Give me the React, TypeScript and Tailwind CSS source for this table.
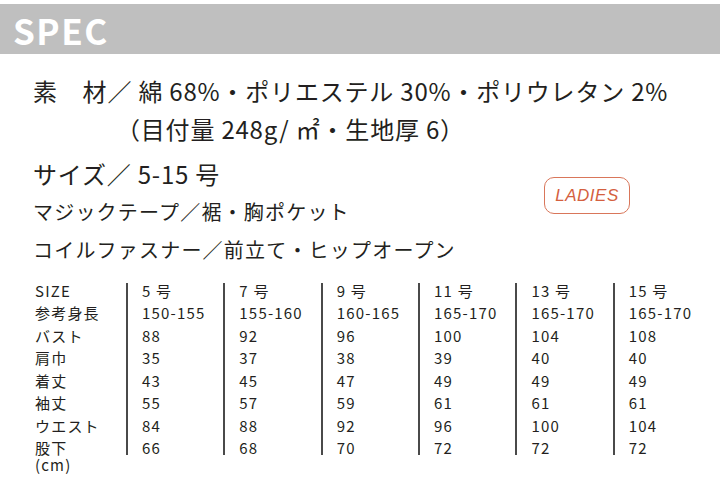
const sizes = [
  { size: '5 号', height: '150-155', vals: ['88', '35', '43', '55', '84', '66'] },
  { size: '7 号', height: '155-160', vals: ['92', '37', '45', '57', '88', '68'] },
  { size: '9 号', height: '160-165', vals: ['96', '38', '47', '59', '92', '70'] },
  { size: '11 号', height: '165-170', vals: ['100', '39', '49', '61', '96', '72'] },
  { size: '13 号', height: '165-170', vals: ['104', '40', '49', '61', '100', '72'] },
  { size: '15 号', height: '165-170', vals: ['108', '40', '49', '61', '104', '72'] },
];

const labels = ['SIZE', '参考身長', 'バスト', '肩巾', '着丈', '袖丈', 'ウエスト'];

const jp = { fontFamily: '"Noto Sans CJK JP", "Noto Sans", sans-serif' };

export default function App() {
  return (
    <div className="w-[720px] h-[500px] bg-white text-[#231f20] overflow-hidden" style={jp}>
      {/* header */}
      <div className="mt-[4px] h-[50px] bg-[#bfbfbf] flex items-center pl-[13px]">
        <span className="text-white text-[35px] font-semibold tracking-[1.5px] leading-none">SPEC</span>
      </div>

      {/* material text */}
      <div className="relative pl-[33px] pt-[18px] tracking-[0.8px]">
        <p className="text-[24px] leading-[38px] whitespace-nowrap">
          素　材／ 綿 68%・ポリエステル 30%・ポリウレタン 2%
        </p>
        <p className="text-[24px] leading-[38px] whitespace-nowrap pl-[83px]">
          （目付量 248g/ ㎡・生地厚 6）
        </p>
        <p className="mt-[7px] text-[24px] leading-[38px] whitespace-nowrap">サイズ／ 5-15 号</p>
        <p className="text-[20px] leading-[38px] whitespace-nowrap tracking-[1.2px]">マジックテープ／裾・胸ポケット</p>
        <p className="text-[20px] leading-[38px] whitespace-nowrap tracking-[1.2px]">
          コイルファスナー／前立て・ヒップオープン
        </p>

        <div className="absolute left-[544px] top-[123px] w-[86px] h-[37px] rounded-[10px] border border-[#d9765a] flex items-center justify-center">
          <span
            className="italic text-[17px] text-[#d4603f] tracking-[0.5px]"
            style={{ fontFamily: '"Liberation Sans", Arial, sans-serif' }}
          >
            LADIES
          </span>
        </div>
      </div>

      {/* size table */}
      <div className="mt-[14px] pl-[35px] flex text-[15px] tracking-[1.2px]">
        <div className="w-[91px]">
          {labels.map((l) => (
            <div key={l} className="h-[22.43px] leading-[15px] whitespace-nowrap">
              {l}
            </div>
          ))}
          <div className="h-[17px] leading-[15px]">股下</div>
          <div className="leading-[15px]">(cm)</div>
        </div>
        {sizes.map((s) => (
          <div key={s.size} className="w-[97.35px] h-[172px] border-l-2 border-[#4a4a4a] pl-[14px]">
            {[s.size, s.height, ...s.vals].map((v, i) => (
              <div key={i} className={i < 7 ? 'h-[22.43px] leading-[15px]' : 'leading-[15px]'}>
                {v}
              </div>
            ))}
          </div>
        ))}
      </div>
    </div>
  );
}
